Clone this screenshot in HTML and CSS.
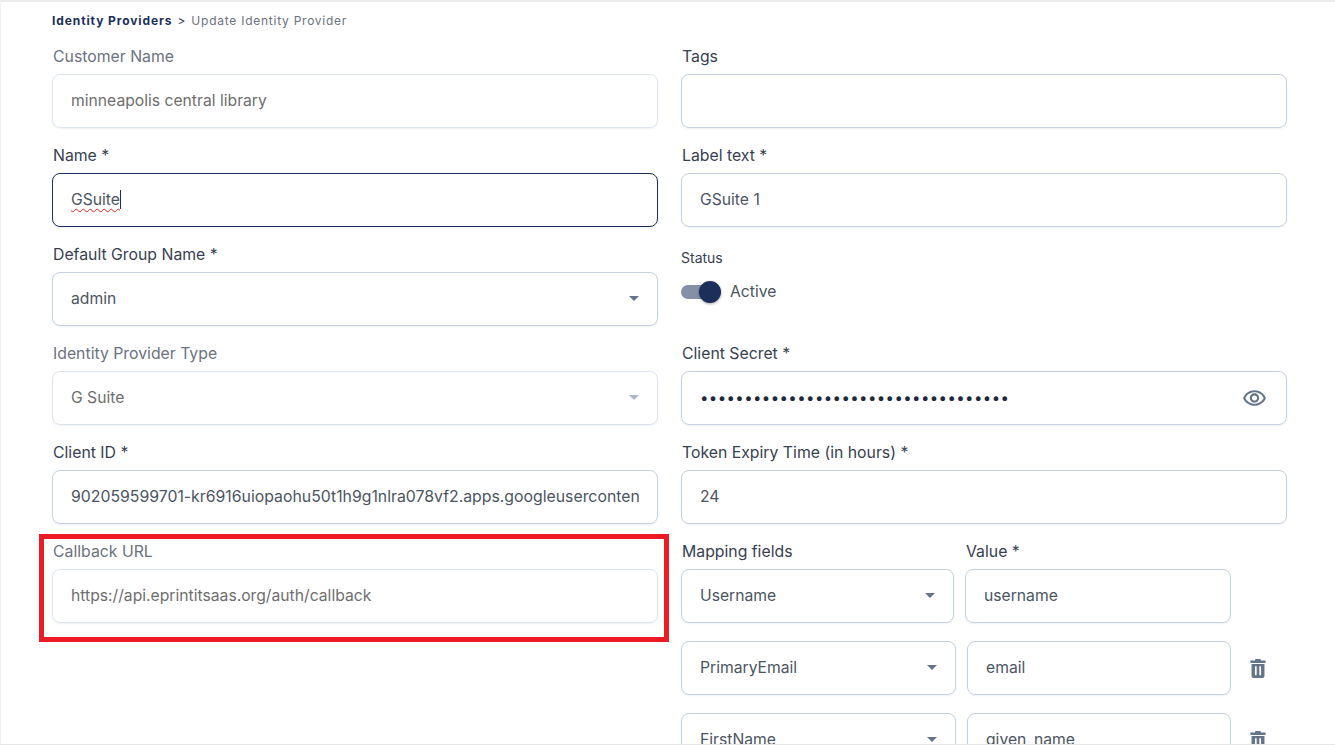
FILE: index.html
```html
<!DOCTYPE html>
<html lang="en">
<head>
    <meta charset="UTF-8">
    <meta name="viewport" content="width=device-width, initial-scale=1.0">
    <title>Update Identity Provider</title>
    <link rel="stylesheet" href="styles.css">
</head>
<body>
    <div class="page">
        <div class="breadcrumb">
            <span class="crumb-parent">Identity Providers</span>
            <span class="crumb-sep">&gt;</span>
            <span class="crumb-current">Update Identity Provider</span>
        </div>

        <form class="form-grid">
            <div class="field disabled">
                <label>Customer Name</label>
                <div class="box">minneapolis central library</div>
            </div>
            <div class="field">
                <label>Tags</label>
                <div class="box"></div>
            </div>

            <div class="field">
                <label>Name *</label>
                <div class="box focused"><span class="misspelled">GSuite</span><span class="caret-line"></span></div>
            </div>
            <div class="field">
                <label>Label text *</label>
                <div class="box">GSuite 1</div>
            </div>

            <div class="field">
                <label>Default Group Name *</label>
                <div class="box select">admin<span class="arrow"></span></div>
            </div>
            <div class="field status-field">
                <label>Status</label>
                <div class="status-row">
                    <span class="toggle"><span class="toggle-knob"></span></span>
                    <span>Active</span>
                </div>
            </div>

            <div class="field disabled">
                <label>Identity Provider Type</label>
                <div class="box select">G Suite<span class="arrow"></span></div>
            </div>
            <div class="field">
                <label>Client Secret *</label>
                <div class="box secret">
                    <span class="dots">&bull;&bull;&bull;&bull;&bull;&bull;&bull;&bull;&bull;&bull;&bull;&bull;&bull;&bull;&bull;&bull;&bull;&bull;&bull;&bull;&bull;&bull;&bull;&bull;&bull;&bull;&bull;&bull;&bull;&bull;&bull;&bull;&bull;&bull;&bull;</span>
                    <svg class="eye" viewBox="0 0 24 24"><path d="M12 6c3.79 0 7.17 2.13 8.82 5.5C19.17 14.87 15.79 17 12 17s-7.17-2.13-8.82-5.5C4.83 8.13 8.21 6 12 6m0-2C7 4 2.73 7.11 1 11.5 2.73 15.89 7 19 12 19s9.27-3.11 11-7.5C21.27 7.11 17 4 12 4zm0 5c1.38 0 2.5 1.12 2.5 2.5S13.38 14 12 14s-2.5-1.12-2.5-2.5S10.62 9 12 9m0-2c-2.48 0-4.5 2.02-4.5 4.5S9.52 16 12 16s4.5-2.02 4.5-4.5S14.48 7 12 7z"/></svg>
                </div>
            </div>

            <div class="field">
                <label>Client ID *</label>
                <div class="box"><span class="clipped">902059599701-kr6916uiopaohu50t1h9g1nlra078vf2.apps.googleusercontent.com</span></div>
            </div>
            <div class="field">
                <label>Token Expiry Time (in hours) *</label>
                <div class="box">24</div>
            </div>

            <div class="field disabled">
                <label>Callback URL</label>
                <div class="box">https://api.eprintitsaas.org/auth/callback</div>
            </div>
            <div class="mapping">
                <div class="map-row first">
                    <div class="field">
                        <label>Mapping fields</label>
                        <div class="box select">Username<span class="arrow"></span></div>
                    </div>
                    <div class="field">
                        <label>Value *</label>
                        <div class="box">username</div>
                    </div>
                </div>
                <div class="map-row">
                    <div class="box select">PrimaryEmail<span class="arrow"></span></div>
                    <div class="box">email</div>
                    <svg class="trash" viewBox="0 0 16 20"><path fill-rule="evenodd" d="M5.500 0h5l.8 1.600H16v2.600H0V1.600h4.700zM1.200 5.300h13.600V18a2 2 0 0 1-2 2H3.200a2 2 0 0 1-2-2zM4.800 7.600v9.600h1.800V7.600zM9.400 7.600v9.600h1.800V7.600z"/></svg>
                </div>
                <div class="map-row">
                    <div class="box select">FirstName<span class="arrow"></span></div>
                    <div class="box">given_name</div>
                    <svg class="trash" viewBox="0 0 16 20"><path fill-rule="evenodd" d="M5.500 0h5l.8 1.600H16v2.600H0V1.600h4.700zM1.200 5.300h13.600V18a2 2 0 0 1-2 2H3.200a2 2 0 0 1-2-2zM4.800 7.600v9.600h1.800V7.600zM9.400 7.600v9.600h1.800V7.600z"/></svg>
                </div>
            </div>
        </form>

        <!-- annotation drawn over the screenshot -->
        <div class="highlight"></div>
    </div>
</body>
</html>
```

FILE: styles.css
```css
* {
    box-sizing: border-box;
}

html, body {
    margin: 0;
    height: 746px;
    overflow: hidden;
    background: #fff;
}

body {
    font-family: Inter, "Liberation Sans", sans-serif;
    font-size: 15.7px;
    color: #4b5563;
}

.page {
    position: relative;
    height: 745px;
    overflow: hidden;
    padding: 12px 48px 0 51px;
    border-top: 2px solid #ececec;
    border-left: 1px solid #edf1f7;
    border-bottom: 1px solid #e3e8f0;
}

/* Breadcrumb */
.breadcrumb {
    display: flex;
    align-items: center;
    gap: 5px;
    height: 12px;
    font-size: 12px;
}

.crumb-parent {
    font-weight: 700;
    letter-spacing: 0.9px;
    color: #1a2f5a;
}

.crumb-sep {
    color: #374151;
}

.crumb-current {
    color: #6b7280;
    margin-left: 1px;
    letter-spacing: 0.75px;
}

/* Form */
.form-grid {
    display: grid;
    grid-template-columns: 606px 606px;
    column-gap: 23px;
    row-gap: 18px;
    margin-top: 21px;
}

.field label {
    display: block;
    height: 20px;
    line-height: 20px;
    margin-bottom: 7px;
    padding-left: 1px;
    font-size: 15.8px;
    color: #374151;
}

.box {
    position: relative;
    display: flex;
    align-items: center;
    height: 54px;
    padding: 0 18px 2px;
    border: 1px solid #c5d0e0;
    border-radius: 8px;
    color: #4b5563;
    white-space: nowrap;
    box-shadow: 0 1px 2px rgba(100, 116, 139, 0.1);
}

.box.focused {
    border-color: #1a2f5a;
}

.clipped {
    display: block;
    min-width: 0;
    overflow: hidden;
    font-size: 15.82px;
}

.misspelled {
    text-decoration: underline wavy #e02020 1px;
    text-underline-offset: 3px;
    text-decoration-skip-ink: none;
}

.caret-line {
    width: 1px;
    height: 19px;
    background: #1a2f5a;
}

.disabled label {
    color: #6b7280;
}

.disabled .box {
    border-color: #dde4ee;
    color: #6e6e6e;
}

/* Select arrow */
.select {
    justify-content: space-between;
}

.arrow {
    width: 0;
    height: 0;
    border-left: 5px solid transparent;
    border-right: 5px solid transparent;
    border-top: 5px solid #64748b;
}

.disabled .arrow {
    border-top-color: #aab5c7;
}

/* Status toggle */
.field.status-field label {
    font-size: 14px;
    margin-top: 3px;
    margin-bottom: 14px;
    padding-left: 0;
}

.status-row {
    display: flex;
    align-items: center;
    gap: 13px;
}

.toggle {
    position: relative;
    display: block;
    width: 36px;
    height: 14px;
    border-radius: 7px;
    background: #8390a6;
}

.toggle-knob {
    position: absolute;
    top: -4px;
    right: -4px;
    width: 22px;
    height: 22px;
    border-radius: 50%;
    background: #1a2f5a;
    box-shadow: 0 1px 3px rgba(0, 0, 0, 0.35);
}

/* Password field */
.secret {
    justify-content: space-between;
    padding-right: 19px;
    padding-bottom: 0;
}

.dots {
    margin-bottom: 2px;
    font-size: 15px;
    letter-spacing: 0.4px;
    color: #1e293b;
}

.eye {
    width: 25px;
    height: 25px;
    fill: #64748b;
}

/* Mapping rows */
.mapping {
    display: flex;
    flex-direction: column;
    gap: 18px;
}

.map-row {
    display: grid;
    grid-template-columns: 275px 264px 16px;
    column-gap: 11px;
    align-items: center;
}

.map-row.first {
    grid-template-columns: 273px 266px;
    align-items: end;
}

.trash {
    width: 16px;
    height: 19px;
    margin-left: 8px;
    fill: #64748b;
}

/* Red annotation box */
.highlight {
    position: absolute;
    left: 38px;
    top: 532px;
    width: 630px;
    height: 108px;
    border: 5px solid #ed1c24;
}
```
